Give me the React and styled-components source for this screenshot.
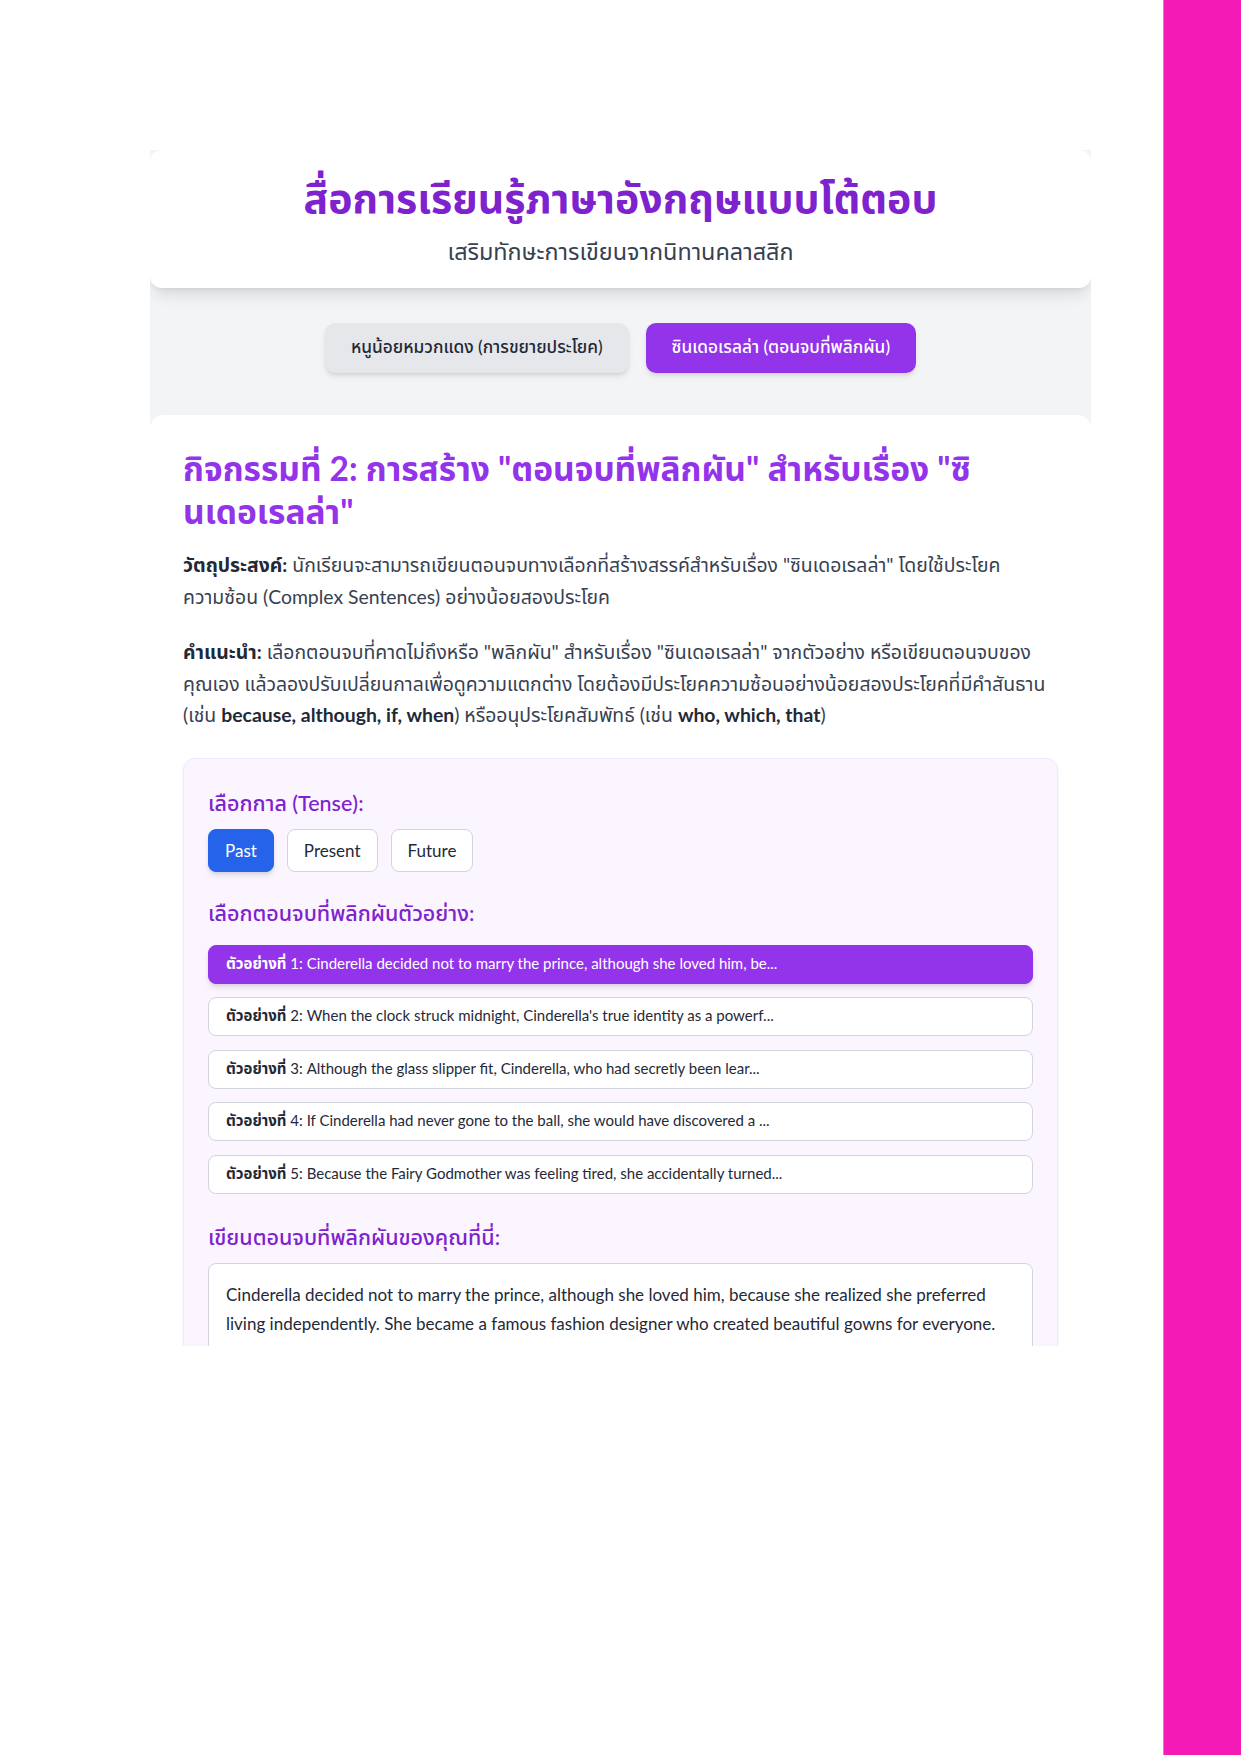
import React, { useState } from "react";
import styled, { createGlobalStyle } from "styled-components";

const GlobalStyle = createGlobalStyle`
  * { box-sizing: border-box; }
  html, body {
    margin: 0;
    padding: 0;
    background: #ffffff;
    font-family: "Lato", "Noto Sans Thai", "Noto Sans Thai UI", "Noto Sans", sans-serif;
  }
`;

const stories = [
  { id: "red", label: "หนูน้อยหมวกแดง (การขยายประโยค)" },
  { id: "cinderella", label: "ซินเดอเรลล่า (ตอนจบที่พลิกผัน)" },
];

const tenses = ["Past", "Present", "Future"];

const examples = [
  "Cinderella decided not to marry the prince, although she loved him, be...",
  "When the clock struck midnight, Cinderella's true identity as a powerf...",
  "Although the glass slipper fit, Cinderella, who had secretly been lear...",
  "If Cinderella had never gone to the ball, she would have discovered a ...",
  "Because the Fairy Godmother was feeling tired, she accidentally turned...",
];

const App = () => {
  const [story, setStory] = useState("cinderella");
  const [tense, setTense] = useState("Past");
  const [picked, setPicked] = useState(0);

  return (
    <>
      <GlobalStyle />
      <Screen>
        <Stage>
          <Viewport>
            <Header>
              <Title>สื่อการเรียนรู้ภาษาอังกฤษแบบโต้ตอบ</Title>
              <Subtitle>เสริมทักษะการเขียนจากนิทานคลาสสิก</Subtitle>
            </Header>

            <Tabs>
              {stories.map((s) => (
                <Tab key={s.id} $active={story === s.id} onClick={() => setStory(s.id)}>
                  {s.label}
                </Tab>
              ))}
            </Tabs>

            <Card>
              <Heading>
                กิจกรรมที่ 2: การสร้าง "ตอนจบที่พลิกผัน" สำหรับเรื่อง "ซินเดอเรลล่า"
              </Heading>
              <Para>
                <b>วัตถุประสงค์:</b> นักเรียนจะสามารถเขียนตอนจบทางเลือกที่สร้างสรรค์สำหรับเรื่อง "ซินเดอเรลล่า" โดยใช้ประโยค<Word>ความซ้อน</Word> (Complex Sentences) อย่างน้อยสองประโยค
              </Para>
              <Para>
                <b>คำแนะนำ:</b> เลือกตอนจบที่คาดไม่ถึงหรือ "พลิกผัน" สำหรับเรื่อง "ซินเดอเรลล่า" จากตัวอย่าง หรือเขียนตอนจบของคุณเอง แล้วลองปรับเปลี่ยนกาลเพื่อดูความแตกต่าง โดยต้องมีประโยคความซ้อนอย่างน้อยสองประโยคที่มีคำสันธาน (เช่น <b>because, although, if, when</b>) หรืออนุประโยคสัมพัทธ์ (เช่น <b>who, which, that</b>)
              </Para>

              <Panel>
                <Label>เลือกกาล (Tense):</Label>
                <TenseRow>
                  {tenses.map((t) => (
                    <TenseButton key={t} $active={tense === t} onClick={() => setTense(t)}>
                      {t}
                    </TenseButton>
                  ))}
                </TenseRow>

                <Label>เลือกตอนจบที่พลิกผันตัวอย่าง:</Label>
                <ExampleList>
                  {examples.map((e, i) => (
                    <Example key={i} $active={picked === i} onClick={() => setPicked(i)}>
                      <b>ตัวอย่างที่</b> {i + 1}: {e}
                    </Example>
                  ))}
                </ExampleList>

                <Label>เขียนตอนจบที่พลิกผันของคุณที่นี่:</Label>
                <Writing
                  rows={8}
                  defaultValue="Cinderella decided not to marry the prince, although she loved him, because she realized she preferred living independently. She became a famous fashion designer who created beautiful gowns for everyone."
                />
              </Panel>
            </Card>
          </Viewport>
        </Stage>
        <SideBar />
      </Screen>
    </>
  );
};

// styled components

const Screen = styled.div`
  display: flex;
  min-height: 1755px;
`;

const Stage = styled.div`
  flex: 1;
  padding: 150px 0 0 150px;
`;

const Viewport = styled.div`
  width: 941px;
  height: 1196px;
  overflow: hidden;
  background: #f3f4f6;
`;

const SideBar = styled.div`
  width: 78px;
  background: #f31ab6;
  border-left: 1px solid #e879c9;
`;

const Header = styled.header`
  background: #ffffff;
  border-radius: 12px;
  box-shadow: 0 10px 15px -3px rgba(0, 0, 0, 0.1), 0 4px 6px -4px rgba(0, 0, 0, 0.1);
  padding: 22px 24px 22px;
  text-align: center;
`;

const Title = styled.h1`
  margin: 0 0 12px;
  font-size: 41px;
  line-height: 52px;
  font-weight: 700;
  color: #7e22ce;
`;

const Subtitle = styled.p`
  margin: 0;
  font-size: 23.4px;
  line-height: 30px;
  color: #374151;
`;

const Tabs = styled.nav`
  display: flex;
  justify-content: center;
  gap: 17px;
  margin: 35px 0 42px;
`;

const Tab = styled.button`
  height: 50px;
  padding: 0 26px;
  border: none;
  border-radius: 10px;
  font-family: inherit;
  font-size: 17.3px;
  font-weight: 500;
  cursor: pointer;
  color: ${(p) => (p.$active ? "#ffffff" : "#1f2937")};
  background: ${(p) => (p.$active ? "#9333ea" : "#e5e7eb")};
  box-shadow: 0 4px 6px -1px rgba(0, 0, 0, 0.1), 0 2px 4px -2px rgba(0, 0, 0, 0.1);
`;

const Card = styled.main`
  background: #ffffff;
  border-radius: 14px;
  padding: 32px 33px 33px;
`;

const Heading = styled.h2`
  margin: 0 0 17px;
  font-size: 33.5px;
  line-height: 42.5px;
  font-weight: 700;
  color: #9333ea;
`;

const Para = styled.p`
  margin: 0 0 24px;
  font-size: 19.4px;
  line-height: 31.5px;
  color: #374151;

  b {
    color: #1f2937;
  }

  &:last-of-type {
    margin-bottom: 27px;
  }
`;

const Word = styled.span`
  white-space: nowrap;
`;

const Panel = styled.section`
  background: #faf5ff;
  border: 1px solid #f3e8ff;
  border-radius: 12px;
  padding: 27px 24px 24px;
  box-shadow: 0 1px 3px rgba(0, 0, 0, 0.06);
`;

const Label = styled.h3`
  margin: 0 0 9px;
  font-size: 21.5px;
  line-height: 34px;
  font-weight: 500;
  color: #7e22ce;
`;

const TenseRow = styled.div`
  display: flex;
  gap: 13px;
  margin-bottom: 24px;
`;

const TenseButton = styled.button`
  height: 43px;
  padding: 0 16px;
  border-radius: 8px;
  font-family: inherit;
  font-size: 17px;
  cursor: pointer;
  color: ${(p) => (p.$active ? "#ffffff" : "#1f2937")};
  background: ${(p) => (p.$active ? "#2563eb" : "#ffffff")};
  border: 1px solid ${(p) => (p.$active ? "#2563eb" : "#d1d5db")};
  box-shadow: ${(p) =>
    p.$active ? "0 4px 6px -1px rgba(0,0,0,0.12), 0 2px 4px -2px rgba(0,0,0,0.1)" : "none"};
`;

const ExampleList = styled.div`
  display: flex;
  flex-direction: column;
  gap: 13.5px;
  margin: 15px 0 26px;
`;

const Example = styled.button`
  display: block;
  width: 100%;
  height: 39px;
  padding: 0 17px;
  text-align: left;
  border-radius: 8px;
  font-family: inherit;
  font-size: 15px;
  cursor: pointer;
  color: ${(p) => (p.$active ? "#ffffff" : "#1f2937")};
  background: ${(p) => (p.$active ? "#9333ea" : "#ffffff")};
  border: 1px solid ${(p) => (p.$active ? "#9333ea" : "#d1d5db")};
  box-shadow: ${(p) =>
    p.$active ? "0 4px 6px -1px rgba(0,0,0,0.12), 0 2px 4px -2px rgba(0,0,0,0.1)" : "none"};

  b {
    font-weight: 700;
  }
`;

const Writing = styled.textarea`
  display: block;
  width: 100%;
  padding: 16px 17px;
  border: 1px solid #d1d5db;
  border-radius: 8px;
  background: #ffffff;
  font-family: inherit;
  font-size: 17px;
  line-height: 29px;
  color: #1f2937;
  resize: vertical;
  outline: none;
`;

export default App;
